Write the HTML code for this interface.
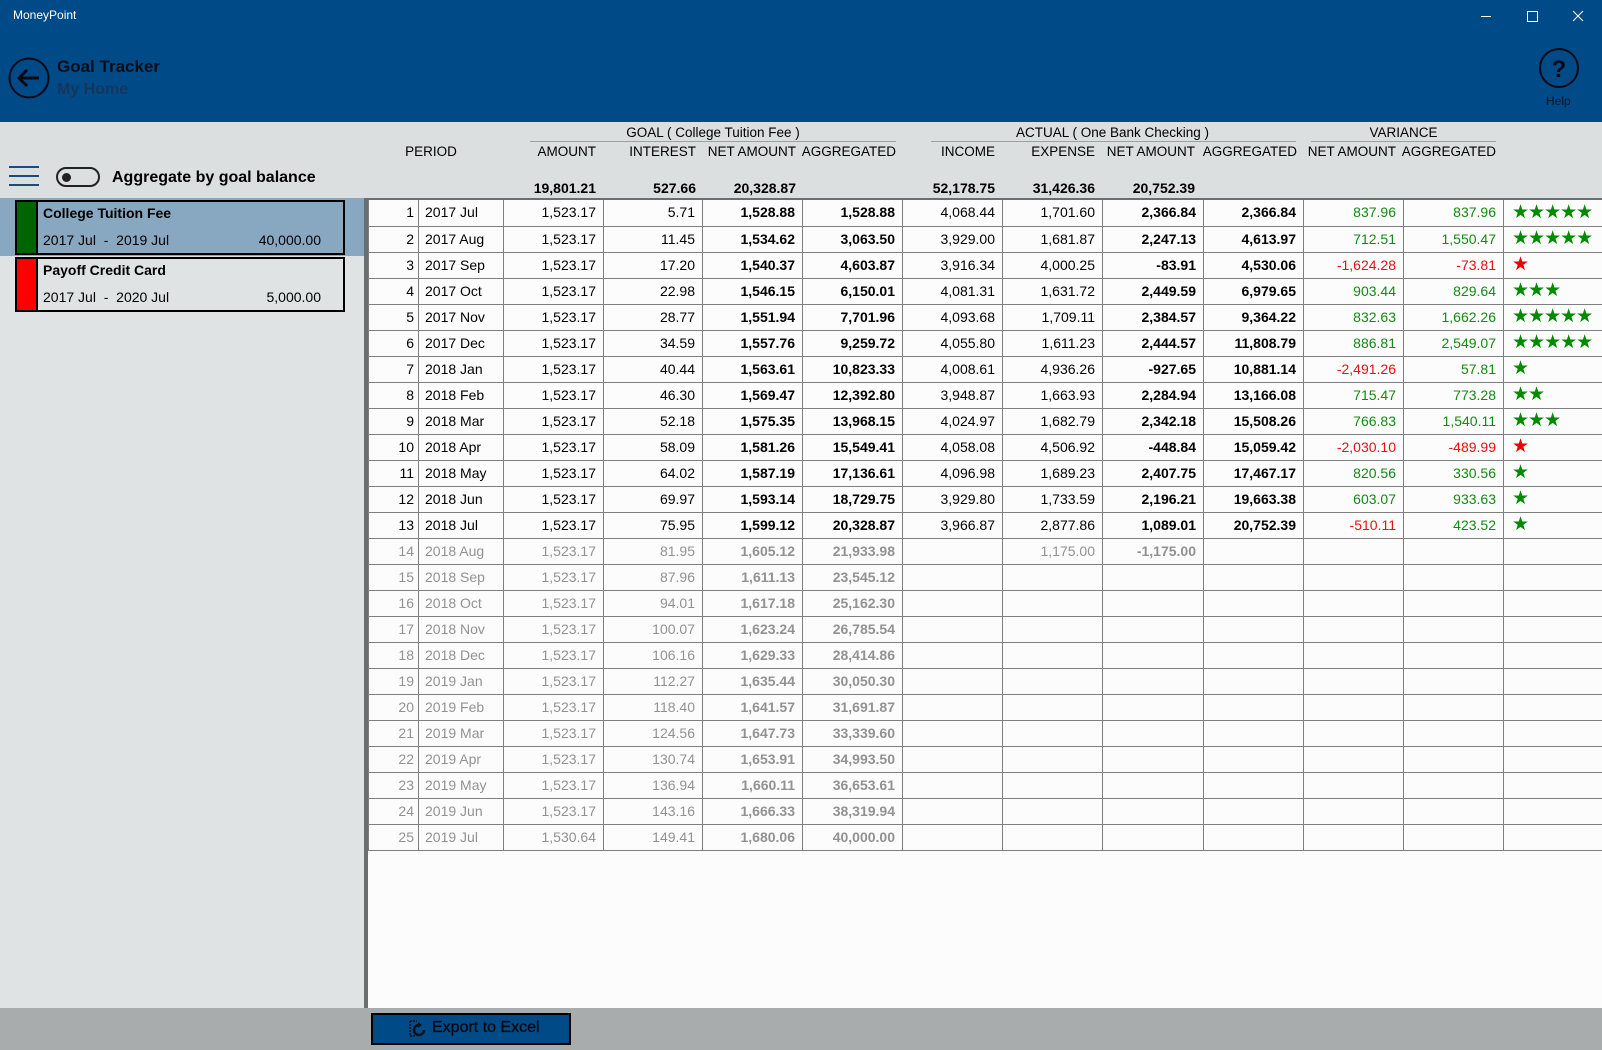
<!DOCTYPE html>
<html><head><meta charset="utf-8">
<style>
*{box-sizing:border-box;margin:0;padding:0}
body{width:1602px;height:1050px;overflow:hidden;font-family:"Liberation Sans",sans-serif;background:#dfe3e3;position:relative;color:#000}
.abs{position:absolute}
#top{left:0;top:0;width:1602px;height:122px;background:#004a87}
#gray{left:0;top:122px;width:1602px;height:76px;background:#dcdfdf}
.hd{position:absolute;font-size:13.5px;white-space:nowrap}
.r{text-align:right}
.ln{position:absolute;height:1px;background:#9aa0a4;top:141px}
#left{left:0;top:198px;width:364px;height:810px;background:#dfe3e3}
#sep{left:364px;top:198px;width:4px;height:810px;background:#6b6e70}
#grid{left:368px;top:198px;width:1234px;height:810px;background:#fcfcfc;border-top:2px solid #6b6e70}
table{border-collapse:collapse;table-layout:fixed;font-size:14px}
td{height:26px;border-right:1px solid #7f7f7f;border-bottom:1px solid #7f7f7f;text-align:right;padding:0 7px 0 0;white-space:nowrap;overflow:hidden;line-height:25px}
td:first-child{border-left:1px solid #7f7f7f;padding-right:4px}
td.p{text-align:left;padding-left:6px}
td.b{font-weight:bold}
tr.f td{color:#929292}
.g{color:#138a13}.rd{color:#e81010}
td.s{text-align:left;padding-left:8px;font-size:19px;letter-spacing:-1px;line-height:24px}
.sg{color:#008a00}.sr{color:#ee0000}
#bot{left:0;top:1008px;width:1602px;height:42px;background:#a9acad}
.item{position:absolute;left:15px;width:330px;height:55px;border:2px solid #000}
.bar{position:absolute;left:0;top:0;width:19px;height:100%;}
.it1{position:absolute;left:26px;top:3px;font-size:14px;font-weight:bold}
.it2{position:absolute;left:26px;top:30px;font-size:14px}
.it3{position:absolute;right:22px;top:30px;font-size:14px}
</style></head><body>
<div id="top" class="abs"></div>
<div class="abs" style="left:13px;top:8px;color:#fff;font-size:12px">MoneyPoint</div>
<svg class="abs" style="left:1470px;top:0" width="132" height="32">
<line x1="11" y1="16.5" x2="21" y2="16.5" stroke="#fff" stroke-width="1"/>
<rect x="57.5" y="11.5" width="10" height="10" fill="none" stroke="#fff"/>
<line x1="103" y1="11" x2="113" y2="21" stroke="#fff"/><line x1="113" y1="11" x2="103" y2="21" stroke="#fff"/>
</svg>
<svg class="abs" style="left:8px;top:57px" width="44" height="44">
<circle cx="21" cy="21" r="19.5" fill="none" stroke="#0a0a14" stroke-width="2"/>
<path d="M11 21 H31 M19 13 L11 21 L19 29" fill="none" stroke="#0a0a14" stroke-width="3"/>
</svg>
<div class="abs" style="left:57px;top:57px;font-size:17px;font-weight:bold;color:#0a0f1a">Goal Tracker</div>
<div class="abs" style="left:57px;top:81px;font-size:16px;font-weight:bold;color:#15365c">My Home</div>
<svg class="abs" style="left:1538px;top:47px" width="42" height="42">
<circle cx="21" cy="21" r="19" fill="none" stroke="#0a0a14" stroke-width="2"/>
<text x="21" y="30" text-anchor="middle" font-family="Liberation Sans" font-size="24" font-weight="bold" fill="#0a0a14">?</text>
</svg>
<div class="abs" style="left:1546px;top:94px;font-size:12px;color:#0a1420">Help</div>

<div id="gray" class="abs"></div>
<div class="hd" style="left:403px;top:144px;width:56px;text-align:center">PERIOD</div>
<div class="hd" style="left:530px;top:125px;width:366px;text-align:center">GOAL ( College Tuition Fee )</div>
<div class="ln" style="left:530px;width:366px"></div>
<div class="hd" style="left:929px;top:125px;width:367px;text-align:center">ACTUAL ( One Bank Checking )</div>
<div class="ln" style="left:931px;width:365px"></div>
<div class="hd" style="left:1311px;top:125px;width:185px;text-align:center">VARIANCE</div>
<div class="ln" style="left:1311px;width:185px"></div>

<div class="hd r" style="left:496px;top:144px;width:100px">AMOUNT</div>
<div class="hd r" style="left:596px;top:144px;width:100px">INTEREST</div>
<div class="hd r" style="left:696px;top:144px;width:100px">NET AMOUNT</div>
<div class="hd r" style="left:796px;top:144px;width:100px">AGGREGATED</div>
<div class="hd r" style="left:895px;top:144px;width:100px">INCOME</div>
<div class="hd r" style="left:995px;top:144px;width:100px">EXPENSE</div>
<div class="hd r" style="left:1095px;top:144px;width:100px">NET AMOUNT</div>
<div class="hd r" style="left:1196px;top:144px;width:101px">AGGREGATED</div>
<div class="hd r" style="left:1296px;top:144px;width:100px">NET AMOUNT</div>
<div class="hd r" style="left:1396px;top:144px;width:100px">AGGREGATED</div>

<div class="hd r" style="left:496px;top:180px;width:100px;font-weight:bold;font-size:14px">19,801.21</div>
<div class="hd r" style="left:596px;top:180px;width:100px;font-weight:bold;font-size:14px">527.66</div>
<div class="hd r" style="left:696px;top:180px;width:100px;font-weight:bold;font-size:14px">20,328.87</div>
<div class="hd r" style="left:895px;top:180px;width:100px;font-weight:bold;font-size:14px">52,178.75</div>
<div class="hd r" style="left:995px;top:180px;width:100px;font-weight:bold;font-size:14px">31,426.36</div>
<div class="hd r" style="left:1095px;top:180px;width:100px;font-weight:bold;font-size:14px">20,752.39</div>

<svg class="abs" style="left:9px;top:164px" width="30" height="24">
<rect x="0" y="2" width="30" height="2" fill="#1a4c7e"/><rect x="0" y="11" width="30" height="2" fill="#1a4c7e"/><rect x="0" y="20" width="30" height="2" fill="#1a4c7e"/>
</svg>
<div class="abs" style="left:56px;top:167px;width:44px;height:20px;border:2px solid #222;border-radius:10px"></div>
<div class="abs" style="left:62px;top:173px;width:9px;height:9px;border-radius:50%;background:#222"></div>
<div class="abs" style="left:112px;top:169px;font-size:16px;font-weight:bold">Aggregate by goal balance</div>

<div id="left" class="abs"></div>
<div class="abs" style="left:0;top:198px;width:364px;height:58px;background:#88a7c0"></div>
<div class="item" style="top:200px"><div class="bar" style="background:#006400"></div>
<div class="abs" style="left:19px;top:0;width:2px;height:100%;background:#000"></div>
<div class="it1">College Tuition Fee</div><div class="it2">2017 Jul&nbsp; - &nbsp;2019 Jul</div><div class="it3">40,000.00</div></div>
<div class="item" style="top:257px"><div class="bar" style="background:#ff0000"></div>
<div class="abs" style="left:19px;top:0;width:2px;height:100%;background:#000"></div>
<div class="it1">Payoff Credit Card</div><div class="it2">2017 Jul&nbsp; - &nbsp;2020 Jul</div><div class="it3">5,000.00</div></div>

<div id="sep" class="abs"></div>
<div id="grid" class="abs">
<table style="width:1234px">
<colgroup><col style="width:50px"><col style="width:85px"><col style="width:100px"><col style="width:99px"><col style="width:100px"><col style="width:100px"><col style="width:100px"><col style="width:100px"><col style="width:101px"><col style="width:100px"><col style="width:100px"><col style="width:100px"><col style="width:99px"></colgroup>
<tr><td>1</td><td class="p">2017 Jul</td><td>1,523.17</td><td>5.71</td><td class="b">1,528.88</td><td class="b">1,528.88</td><td>4,068.44</td><td>1,701.60</td><td class="b">2,366.84</td><td class="b">2,366.84</td><td class="g">837.96</td><td class="g">837.96</td><td class="s sg">★★★★★</td></tr>
<tr><td>2</td><td class="p">2017 Aug</td><td>1,523.17</td><td>11.45</td><td class="b">1,534.62</td><td class="b">3,063.50</td><td>3,929.00</td><td>1,681.87</td><td class="b">2,247.13</td><td class="b">4,613.97</td><td class="g">712.51</td><td class="g">1,550.47</td><td class="s sg">★★★★★</td></tr>
<tr><td>3</td><td class="p">2017 Sep</td><td>1,523.17</td><td>17.20</td><td class="b">1,540.37</td><td class="b">4,603.87</td><td>3,916.34</td><td>4,000.25</td><td class="b">-83.91</td><td class="b">4,530.06</td><td class="rd">-1,624.28</td><td class="rd">-73.81</td><td class="s sr">★</td></tr>
<tr><td>4</td><td class="p">2017 Oct</td><td>1,523.17</td><td>22.98</td><td class="b">1,546.15</td><td class="b">6,150.01</td><td>4,081.31</td><td>1,631.72</td><td class="b">2,449.59</td><td class="b">6,979.65</td><td class="g">903.44</td><td class="g">829.64</td><td class="s sg">★★★</td></tr>
<tr><td>5</td><td class="p">2017 Nov</td><td>1,523.17</td><td>28.77</td><td class="b">1,551.94</td><td class="b">7,701.96</td><td>4,093.68</td><td>1,709.11</td><td class="b">2,384.57</td><td class="b">9,364.22</td><td class="g">832.63</td><td class="g">1,662.26</td><td class="s sg">★★★★★</td></tr>
<tr><td>6</td><td class="p">2017 Dec</td><td>1,523.17</td><td>34.59</td><td class="b">1,557.76</td><td class="b">9,259.72</td><td>4,055.80</td><td>1,611.23</td><td class="b">2,444.57</td><td class="b">11,808.79</td><td class="g">886.81</td><td class="g">2,549.07</td><td class="s sg">★★★★★</td></tr>
<tr><td>7</td><td class="p">2018 Jan</td><td>1,523.17</td><td>40.44</td><td class="b">1,563.61</td><td class="b">10,823.33</td><td>4,008.61</td><td>4,936.26</td><td class="b">-927.65</td><td class="b">10,881.14</td><td class="rd">-2,491.26</td><td class="g">57.81</td><td class="s sg">★</td></tr>
<tr><td>8</td><td class="p">2018 Feb</td><td>1,523.17</td><td>46.30</td><td class="b">1,569.47</td><td class="b">12,392.80</td><td>3,948.87</td><td>1,663.93</td><td class="b">2,284.94</td><td class="b">13,166.08</td><td class="g">715.47</td><td class="g">773.28</td><td class="s sg">★★</td></tr>
<tr><td>9</td><td class="p">2018 Mar</td><td>1,523.17</td><td>52.18</td><td class="b">1,575.35</td><td class="b">13,968.15</td><td>4,024.97</td><td>1,682.79</td><td class="b">2,342.18</td><td class="b">15,508.26</td><td class="g">766.83</td><td class="g">1,540.11</td><td class="s sg">★★★</td></tr>
<tr><td>10</td><td class="p">2018 Apr</td><td>1,523.17</td><td>58.09</td><td class="b">1,581.26</td><td class="b">15,549.41</td><td>4,058.08</td><td>4,506.92</td><td class="b">-448.84</td><td class="b">15,059.42</td><td class="rd">-2,030.10</td><td class="rd">-489.99</td><td class="s sr">★</td></tr>
<tr><td>11</td><td class="p">2018 May</td><td>1,523.17</td><td>64.02</td><td class="b">1,587.19</td><td class="b">17,136.61</td><td>4,096.98</td><td>1,689.23</td><td class="b">2,407.75</td><td class="b">17,467.17</td><td class="g">820.56</td><td class="g">330.56</td><td class="s sg">★</td></tr>
<tr><td>12</td><td class="p">2018 Jun</td><td>1,523.17</td><td>69.97</td><td class="b">1,593.14</td><td class="b">18,729.75</td><td>3,929.80</td><td>1,733.59</td><td class="b">2,196.21</td><td class="b">19,663.38</td><td class="g">603.07</td><td class="g">933.63</td><td class="s sg">★</td></tr>
<tr><td>13</td><td class="p">2018 Jul</td><td>1,523.17</td><td>75.95</td><td class="b">1,599.12</td><td class="b">20,328.87</td><td>3,966.87</td><td>2,877.86</td><td class="b">1,089.01</td><td class="b">20,752.39</td><td class="rd">-510.11</td><td class="g">423.52</td><td class="s sg">★</td></tr>
<tr class="f"><td>14</td><td class="p">2018 Aug</td><td>1,523.17</td><td>81.95</td><td class="b">1,605.12</td><td class="b">21,933.98</td><td></td><td>1,175.00</td><td class="b">-1,175.00</td><td></td><td></td><td></td><td></td></tr>
<tr class="f"><td>15</td><td class="p">2018 Sep</td><td>1,523.17</td><td>87.96</td><td class="b">1,611.13</td><td class="b">23,545.12</td><td></td><td></td><td></td><td></td><td></td><td></td><td></td></tr>
<tr class="f"><td>16</td><td class="p">2018 Oct</td><td>1,523.17</td><td>94.01</td><td class="b">1,617.18</td><td class="b">25,162.30</td><td></td><td></td><td></td><td></td><td></td><td></td><td></td></tr>
<tr class="f"><td>17</td><td class="p">2018 Nov</td><td>1,523.17</td><td>100.07</td><td class="b">1,623.24</td><td class="b">26,785.54</td><td></td><td></td><td></td><td></td><td></td><td></td><td></td></tr>
<tr class="f"><td>18</td><td class="p">2018 Dec</td><td>1,523.17</td><td>106.16</td><td class="b">1,629.33</td><td class="b">28,414.86</td><td></td><td></td><td></td><td></td><td></td><td></td><td></td></tr>
<tr class="f"><td>19</td><td class="p">2019 Jan</td><td>1,523.17</td><td>112.27</td><td class="b">1,635.44</td><td class="b">30,050.30</td><td></td><td></td><td></td><td></td><td></td><td></td><td></td></tr>
<tr class="f"><td>20</td><td class="p">2019 Feb</td><td>1,523.17</td><td>118.40</td><td class="b">1,641.57</td><td class="b">31,691.87</td><td></td><td></td><td></td><td></td><td></td><td></td><td></td></tr>
<tr class="f"><td>21</td><td class="p">2019 Mar</td><td>1,523.17</td><td>124.56</td><td class="b">1,647.73</td><td class="b">33,339.60</td><td></td><td></td><td></td><td></td><td></td><td></td><td></td></tr>
<tr class="f"><td>22</td><td class="p">2019 Apr</td><td>1,523.17</td><td>130.74</td><td class="b">1,653.91</td><td class="b">34,993.50</td><td></td><td></td><td></td><td></td><td></td><td></td><td></td></tr>
<tr class="f"><td>23</td><td class="p">2019 May</td><td>1,523.17</td><td>136.94</td><td class="b">1,660.11</td><td class="b">36,653.61</td><td></td><td></td><td></td><td></td><td></td><td></td><td></td></tr>
<tr class="f"><td>24</td><td class="p">2019 Jun</td><td>1,523.17</td><td>143.16</td><td class="b">1,666.33</td><td class="b">38,319.94</td><td></td><td></td><td></td><td></td><td></td><td></td><td></td></tr>
<tr class="f"><td>25</td><td class="p">2019 Jul</td><td>1,530.64</td><td>149.41</td><td class="b">1,680.06</td><td class="b">40,000.00</td><td></td><td></td><td></td><td></td><td></td><td></td><td></td></tr>
</table>
</div>

<div id="bot" class="abs"></div>
<div class="abs" style="left:371px;top:1013px;width:200px;height:32px;background:#004a87;border:2px solid #000"></div>
<svg class="abs" style="left:409px;top:1020px" width="18" height="18">
<path d="M1 1 H8 M1 1 V16 M1 16 H6" fill="none" stroke="#111" stroke-width="1.5" stroke-dasharray="2 1"/>
<path d="M15 10 A5 5 0 1 1 10 5" fill="none" stroke="#111" stroke-width="2.5"/>
<path d="M9 2 L13 5 L9 8 Z" fill="#111"/>
</svg>
<div class="abs" style="left:432px;top:1019px;font-size:16px;color:#05080e;-webkit-text-stroke:0.3px #05080e">Export to Excel</div>
</body></html>
